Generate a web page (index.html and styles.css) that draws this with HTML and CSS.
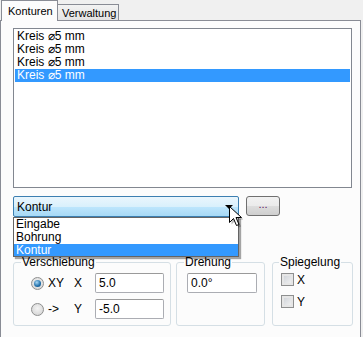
FILE: index.html
```html
<html>
<head>
	<title>Konturen</title>
	<meta charset="UTF-8">
	<link rel="stylesheet" href="styles.css">
</head>
<body>

	<div class="tabs">
		<div class="tab active">Konturen</div>
		<div class="tab">Verwaltung</div>
	</div>

	<div class="panel">
		<div class="list">
			<div class="item">Kreis ⌀5 mm</div>
			<div class="item">Kreis ⌀5 mm</div>
			<div class="item">Kreis ⌀5 mm</div>
			<div class="item selected">Kreis ⌀5 mm</div>
		</div>

		<div class="combo-row">
			<div class="combo">
				<span>Kontur</span>
				<span class="arrow"></span>
				<div class="dropdown">
					<div class="option">Eingabe</div>
					<div class="option">Bohrung</div>
					<div class="option selected">Kontur</div>
				</div>
			</div>
			<div class="button">...</div>
		</div>

		<div class="groups">
			<fieldset class="group shift">
				<legend>Verschiebung</legend>
				<div class="row">
					<span class="radio checked"></span>
					<span class="mode">XY</span>
					<span class="axis">X</span>
					<div class="input">5.0</div>
				</div>
				<div class="row">
					<span class="radio"></span>
					<span class="mode">-&gt;</span>
					<span class="axis">Y</span>
					<div class="input">-5.0</div>
				</div>
			</fieldset>
			<fieldset class="group turn">
				<legend>Drehung</legend>
				<div class="input">0.0°</div>
			</fieldset>
			<fieldset class="group mirror">
				<legend>Spiegelung</legend>
				<div class="check-row"><span class="checkbox"></span>X</div>
				<div class="check-row"><span class="checkbox"></span>Y</div>
			</fieldset>
		</div>
	</div>

	<!-- mouse pointer over the combo arrow -->
	<svg class="cursor" width="14" height="22" viewBox="0 0 14 22">
		<path d="M1.5 1.5 L1.5 17.5 L5.5 13.5 L8.5 20.5 L11 19.5 L8 12.5 L13.5 12.5 Z" fill="#000" fill-opacity="0.25" transform="translate(1 1)"/>
		<path d="M0.5 0.5 L0.5 16.5 L4.5 12.5 L7.5 19.5 L10 18.5 L7 11.5 L12.5 11.5 Z" fill="#fff" stroke="#000" stroke-width="1"/>
	</svg>

</body>
</html>
```

FILE: styles.css
```css
* {
	margin: 0;
	padding: 0;
	box-sizing: border-box;
}

body {
	background: #f0f0f0;
	font-family: "Liberation Sans", Arial, sans-serif;
	font-size: 11px;
	color: #000;
	width: 363px;
	height: 337px;
	overflow: hidden;
	position: relative;
}

.tabs {
	display: flex;
	align-items: flex-end;
	height: 20px;
	padding-left: 1px;
}

.tab {
	height: 16px;
	width: 61px;
	padding: 1px 0 0 4px;
	border: 1px solid #898c95;
	border-bottom: none;
	border-left: none;
	background: linear-gradient(#f3f3f3, #e3e3e3);
	line-height: 14px;
	white-space: nowrap;
}

.tab.active {
	position: relative;
	z-index: 2;
	height: 21px;
	width: 57px;
	margin-bottom: -1px;
	padding: 3px 0 0 6px;
	border-left: 1px solid #898c95;
	background: #fcfcfc;
}

.panel {
	width: 361px;
	height: 330px;
	border: 1px solid #898c95;
	background: #fcfcfc;
	padding: 7px 0 0 12px;
}

.list {
	width: 339px;
	height: 160px;
	border: 1px solid #828790;
	background: #fff;
	padding: 1px;
}

.item {
	height: 13px;
	line-height: 13px;
	padding-left: 2px;
	font-size: 12px;
}

.item.selected,
.option.selected {
	background: #3399ff;
	color: #fff;
}

.combo-row {
	display: flex;
	gap: 7px;
	margin-top: 8px;
}

.combo {
	position: relative;
	width: 226px;
	height: 21px;
	border: 1px solid #3c7fb1;
	border-radius: 2px;
	background: linear-gradient(#eaf6fd, #d9f0fc 50%, #bee6fd 50%, #a7d9f5);
	padding: 3px 0 0 3px;
	line-height: 14px;
	font-size: 12px;
}

.arrow {
	position: absolute;
	right: 5px;
	top: 8px;
	border-left: 4px solid transparent;
	border-right: 4px solid transparent;
	border-top: 4px solid #000;
}

.dropdown {
	position: absolute;
	z-index: 3;
	left: -1px;
	top: 20px;
	width: 226px;
	height: 40px;
	border: 1px solid #646464;
	background: #fff;
	box-shadow: 2px 2px 1px rgba(0, 0, 0, 0.35);
}

.option {
	height: 13px;
	line-height: 13px;
	padding-left: 2px;
}

.option.selected {
	height: 12px;
}

.button {
	width: 34px;
	height: 20px;
	border: 1px solid #707070;
	border-radius: 3px;
	background: linear-gradient(#f2f2f2, #ebebeb 50%, #dddddd 50%, #cfcfcf);
	text-align: center;
	line-height: 15px;
	color: #602060;
}

.groups {
	display: flex;
	margin-top: 39px;
}

.group {
	height: 70px;
	border: 1px solid #d5dfe5;
	border-radius: 3px;
	padding: 4px 0 0 0;
	font-size: 12px;
}

.group legend {
	margin-left: 7px;
	padding: 0 1px;
	line-height: 13px;
}

.shift {
	width: 158px;
}

.turn {
	width: 89px;
	margin-left: 5px;
}

.mirror {
	width: 81px;
	margin-left: 7px;
}

.mirror legend {
	margin-left: 6px;
}

.row {
	display: flex;
	align-items: center;
	height: 20px;
	margin: 0 0 6px 17px;
}

.radio {
	width: 13px;
	height: 13px;
	border-radius: 50%;
	border: 1px solid #8e8f8f;
	background: radial-gradient(circle at 50% 40%, #f4f4f4, #cfcfcf);
	position: relative;
}

.radio.checked::after {
	content: "";
	position: absolute;
	left: 2px;
	top: 2px;
	width: 7px;
	height: 7px;
	border-radius: 50%;
	background: radial-gradient(circle at 40% 35%, #a8d8f6, #1c6ca8 60%, #0f4b80);
}

.mode {
	width: 26px;
	margin-left: 4px;
}

.axis {
	width: 21px;
}

.input {
	width: 69px;
	height: 20px;
	border: 1px solid #abadb3;
	border-top-color: #9a9a9a;
	border-radius: 2px;
	background: #fff;
	padding: 2px 0 0 3px;
	line-height: 15px;
}

.turn .input {
	width: 70px;
	margin-left: 10px;
}

.check-row {
	display: flex;
	align-items: center;
	gap: 3px;
	height: 13px;
	margin: 0 0 9px 8px;
}

.checkbox {
	width: 13px;
	height: 13px;
	border: 1px solid #8e8f8f;
	background: linear-gradient(135deg, #cbcfd5, #f6f6f6);
	box-shadow: inset 0 0 0 2px #e6e6e6;
}

.cursor {
	position: absolute;
	left: 229px;
	top: 206px;
	z-index: 5;
}
```
